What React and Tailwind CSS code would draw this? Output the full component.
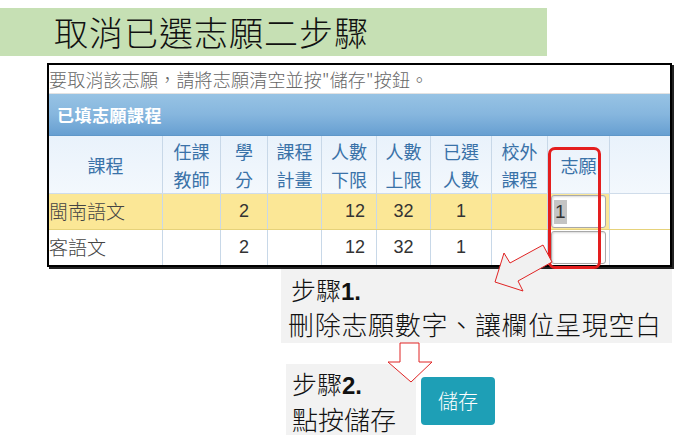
import React from 'react';

const COLS = 'grid grid-cols-[114px_58px_47px_54px_55px_54px_61px_56px_62px_60px]';
const CJK = "font-['Noto_Sans_CJK_TC','Noto_Sans',sans-serif]";
const NUM = "font-['Liberation_Sans','Noto_Sans_CJK_TC',sans-serif]";

const HEADERS = [
    ['課程'],
    ['任課', '教師'],
    ['學', '分'],
    ['課程', '計畫'],
    ['人數', '下限'],
    ['人數', '上限'],
    ['已選', '人數'],
    ['校外', '課程'],
    ['志願'],
    [],
];

const ROWS = [
    { name: '閩南語文', credit: '2', min: '12', max: '32', picked: '1', wish: '1', highlight: true },
    { name: '客語文', credit: '2', min: '12', max: '32', picked: '1', wish: '', highlight: false },
];

function WishInput({ value }) {
    return (
        <div className="ml-[3px] mt-[1px] h-[33px] w-[55px] rounded-[3px] border border-[#a8a8a8] bg-white shadow-[inset_1px_1px_2px_rgba(0,0,0,0.15)] flex items-center pl-[2px]">
            {value && <span className={`${NUM} bg-[#c4c4c4] text-[19px] leading-[24px] text-[#333] px-[1px]`}>{value}</span>}
        </div>
    );
}

function DataRow({ row }) {
    const bg = row.highlight ? 'bg-[#fbe796]' : 'bg-white';
    const cell = `h-[35px] border-r border-[#c8d8e8] flex items-center justify-center text-[18px] text-[#333] ${NUM}`;
    return (
        <div className={`${COLS} ${row.highlight ? 'border-b border-[#e6d27a]' : ''}`}>
            <div className={`h-[35px] border-r border-[#c8d8e8] flex items-center text-[19px] text-[#444] font-light ${CJK} ${bg}`}>{row.name}</div>
            <div className={`${cell} ${bg}`}></div>
            <div className={`${cell} ${bg}`}>{row.credit}</div>
            <div className={`${cell} ${bg}`}></div>
            <div className={`${cell} ${bg} justify-end pr-[11px]`}>{row.min}</div>
            <div className={`${cell} ${bg}`}>{row.max}</div>
            <div className={`${cell} ${bg}`}>{row.picked}</div>
            <div className={`${cell} ${bg}`}></div>
            <div className={`h-[35px] border-r border-[#c8d8e8] ${bg}`}>
                <WishInput value={row.wish} />
            </div>
            <div className="h-[35px] bg-white"></div>
        </div>
    );
}

export default function App() {
    return (
        <div className={`relative w-[680px] h-[446px] bg-white overflow-hidden ${CJK}`}>
            {/* title banner */}
            <div className="mt-[8px] h-[48px] w-[547px] bg-[#c6e0b4] pl-[54px] flex items-center">
                <h1 className="text-[34px] leading-none text-[#111] font-light tracking-[1px]">取消已選志願二步驟</h1>
            </div>

            {/* screenshot of the form */}
            <div className="ml-[47px] mt-[7px] w-[625px] border-2 border-black shadow-[2px_2px_0_#222] bg-white">
                <div className="h-[29px] flex items-center text-[18px] text-[#666] font-light border-b border-[#e2e2e2] tracking-[0.2px]">
                    要取消該志願，請將志願清空並按"儲存"按鈕。
                </div>
                <div className="h-[42px] bg-gradient-to-b from-[#97c3e4] via-[#86b6de] to-[#679fd1] flex items-center pl-[8px] border-b border-[#5f97c8]">
                    <span className="text-white font-bold text-[17px] tracking-[0.5px]">已填志願課程</span>
                </div>
                <div className={`${COLS} bg-gradient-to-b from-[#e9f2fb] to-[#f3f8fd] border-b border-[#cfdcea]`}>
                    {HEADERS.map((lines, i) => (
                        <div key={i} className={`h-[57px] flex flex-col items-center justify-center text-[18px] leading-[28px] text-[#3a72a8] ${i < 9 ? 'border-r border-[#c8d8e8]' : ''}`}>
                            {lines.map((l) => (
                                <span key={l}>{l}</span>
                            ))}
                        </div>
                    ))}
                </div>
                {ROWS.map((row) => (
                    <DataRow key={row.name} row={row} />
                ))}
            </div>

            {/* step 1 */}
            <div className="ml-[281px] mt-[2px] w-[391px] h-[74px] bg-[#f2f2f2] pl-[10px] pt-[4px] text-[#111] font-light">
                <div className="text-[25px] leading-[32px]">
                    步驟<span className="font-['Liberation_Sans',sans-serif] font-bold text-[24px]">1.</span>
                </div>
                <div className="-ml-[3px] text-[26px] leading-[32px] tracking-[0.7px]">刪除志願數字、讓欄位呈現空白</div>
            </div>

            {/* step 2 */}
            <div className="ml-[286px] mt-[21px] flex items-center gap-[5px]">
                <div className="w-[130px] h-[71px] bg-[#f2f2f2] pl-[6px] pt-[3px] text-[#111] font-light">
                    <div className="text-[25px] leading-[32px]">
                        步驟<span className="font-['Liberation_Sans',sans-serif] font-bold text-[24px]">2.</span>
                    </div>
                    <div className="text-[26px] leading-[33px]">點按儲存</div>
                </div>
                <button className="mt-[3px] w-[74px] h-[48px] rounded-[4px] bg-[#1e9fb6] text-white text-[20px] font-light">儲存</button>
            </div>

            {/* red highlight box round the wish column */}
            <div className="absolute left-[548px] top-[147px] w-[53px] h-[122px] border-[3px] border-[#e41e1e] rounded-[7px]"></div>

            {/* callout arrows */}
            <svg className="absolute left-0 top-0 pointer-events-none" width="680" height="446" viewBox="0 0 680 446">
                <polygon
                    points="495,282 504,253 510,263 543,245 552,262 518,281 523,291"
                    fill="#f1f1f1"
                    stroke="#e02424"
                    strokeWidth="1"
                    strokeLinejoin="miter"
                />
                <polygon
                    points="400,343 419,343 419,362 432,362 411,382 388,362 400,362"
                    fill="#ffffff"
                    stroke="#e02424"
                    strokeWidth="1"
                />
            </svg>
        </div>
    );
}
